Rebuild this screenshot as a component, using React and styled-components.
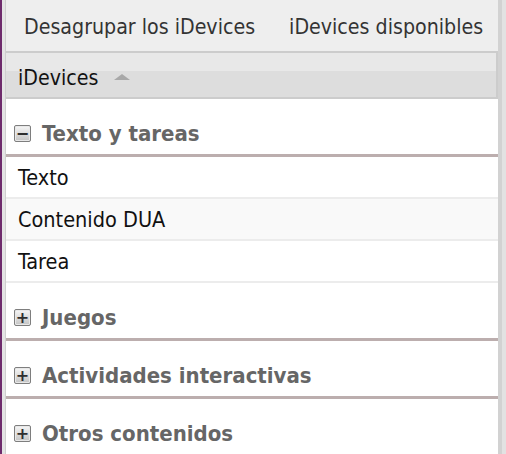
import React from "react";
import styled, { createGlobalStyle } from "styled-components";

const GlobalStyle = createGlobalStyle`
  html, body {
    margin: 0;
    padding: 0;
    background: #ffffff;
  }
  body {
    font-family: "DejaVu Sans Condensed", "DejaVu Sans", sans-serif;
    overflow: hidden;
  }
`;

const groups = [
  { name: "Texto y tareas", open: true, items: ["Texto", "Contenido DUA", "Tarea"] },
  { name: "Juegos", open: false, items: [] },
  { name: "Actividades interactivas", open: false, items: [] },
  { name: "Otros contenidos", open: false, items: [] },
];

const App = () => {
  return (
    <>
      <GlobalStyle />
      <Page>
        <Accent />
        <Panel>
          <Toolbar>
            <ToolButton>Desagrupar los iDevices</ToolButton>
            <ToolButton>iDevices disponibles</ToolButton>
          </Toolbar>
          <Header>
            <span>iDevices</span>
            <SortArrow />
          </Header>
          <List>
            {groups.map((g) => (
              <Group key={g.name}>
                <Category>
                  <ToggleIcon>{g.open ? "−" : "+"}</ToggleIcon>
                  {g.name}
                </Category>
                {g.items.map((item, i) => (
                  <Row key={item} $alt={i % 2 === 1}>
                    {item}
                  </Row>
                ))}
              </Group>
            ))}
          </List>
        </Panel>
        <Scrollbar />
      </Page>
    </>
  );
};

export default App;

const Page = styled.div`
  display: flex;
  height: 454px;
  width: 506px;
  overflow: hidden;
`;

const Accent = styled.div`
  width: 2px;
  background: #6e2b6c;
  flex-shrink: 0;
`;

const Panel = styled.div`
  flex: 1;
  display: flex;
  flex-direction: column;
  border-left: 3px solid #e4e4e4;
  box-shadow: inset 1px 0 0 #cfcfcf;
  padding-left: 1px;
  min-width: 0;
`;

const Toolbar = styled.div`
  height: 53px;
  display: flex;
  align-items: center;
  gap: 34px;
  padding-left: 18px;
  padding-top: 2px;
  background: #eeeeee;
  border-bottom: 2px solid #cccccc;
  box-sizing: border-box;
  flex-shrink: 0;
`;

const ToolButton = styled.span`
  font-size: 21.2px;
  color: #333333;
  white-space: nowrap;
`;

const Header = styled.div`
  height: 46px;
  display: flex;
  align-items: center;
  padding-left: 12px;
  padding-top: 4px;
  box-sizing: border-box;
  background: linear-gradient(#e8e8e8 0, #e8e8e8 18px, #dddddd 18px, #dddddd 100%);
  border-bottom: 2px solid #cccccc;
  border-right: 2px solid #cccccc;
  font-size: 21.2px;
  color: #111111;
  flex-shrink: 0;
`;

const SortArrow = styled.span`
  margin-left: 16px;
  width: 0;
  height: 0;
  border-left: 8px solid transparent;
  border-right: 8px solid transparent;
  border-bottom: 6px solid #a8a8a8;
`;

const List = styled.div`
  flex: 1;
  background: #ffffff;
`;

const Group = styled.div``;

const Category = styled.div`
  height: 58px;
  display: flex;
  align-items: center;
  gap: 11px;
  padding-left: 8px;
  padding-top: 14px;
  box-sizing: border-box;
  border-bottom: 3px solid #bcaeae;
  font-size: 22px;
  font-weight: bold;
  color: #666666;
`;

const ToggleIcon = styled.span`
  width: 15px;
  height: 15px;
  border: 1px solid #7e7e7e;
  border-radius: 2px;
  background: linear-gradient(#f6f6f6, #c4c4c4);
  box-shadow: inset 0 0 0 1px #e8e8e8;
  display: flex;
  align-items: center;
  justify-content: center;
  font-size: 16px;
  line-height: 1;
  font-weight: bold;
  color: #2e2e2e;
  font-family: "DejaVu Sans", sans-serif;
`;

const Row = styled.div`
  height: 42px;
  display: flex;
  align-items: center;
  padding-left: 12px;
  box-sizing: border-box;
  border-bottom: 2px solid #ececec;
  background: ${(p) => (p.$alt ? "#f9f9f9" : "#ffffff")};
  font-size: 21.5px;
  color: #111111;
`;

const Scrollbar = styled.div`
  width: 8px;
  flex-shrink: 0;
  background: linear-gradient(90deg, #d2d2d2 0, #d2d2d2 4px, #e2e2e2 4px);
`;
